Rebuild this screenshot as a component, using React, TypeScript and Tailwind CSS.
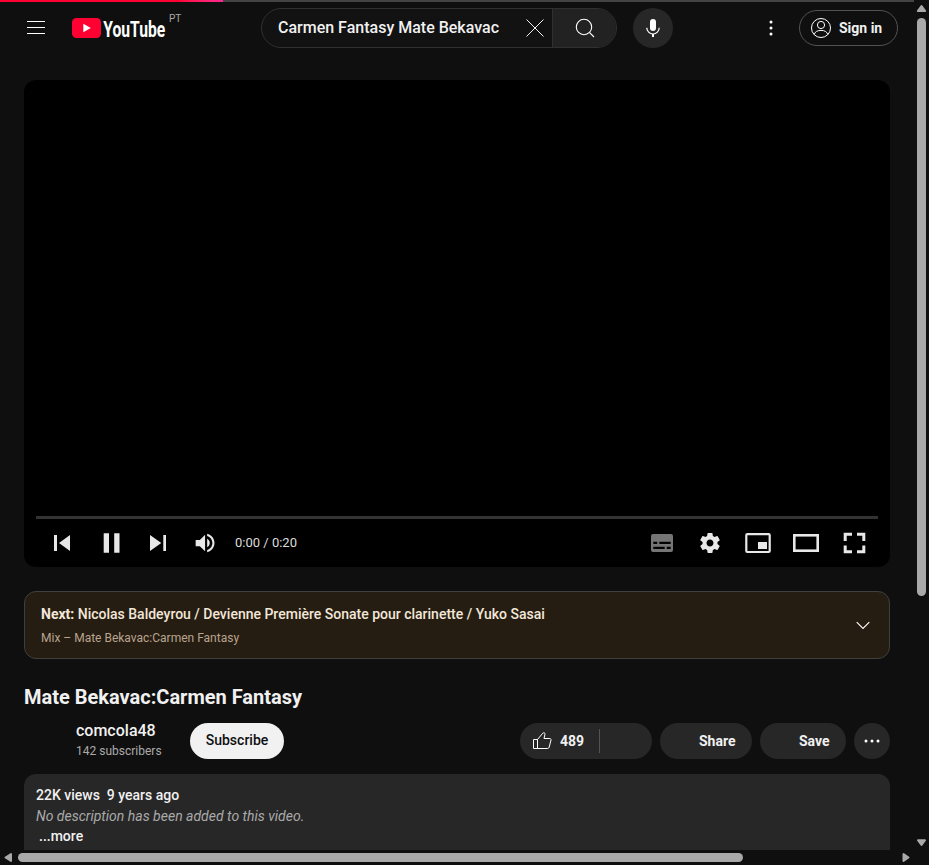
import type { ReactNode } from "react";

const Svg = ({ w, h = w, className = "", children }: { w: number; h?: number; className?: string; children: ReactNode }) => (
  <svg width={w} height={h} viewBox={`0 0 ${w} ${h}`} fill="none" className={`block shrink-0 ${className}`}>
    {children}
  </svg>
);

const GEAR =
  "m 23.94,18.78 c .03,-0.25 .05,-0.51 .05,-0.78 0,-0.27 -0.02,-0.52 -0.05,-0.78 l 1.68,-1.32 c .15,-0.12 .19,-0.33 .09,-0.51 l -1.6,-2.76 c -0.09,-0.17 -0.31,-0.24 -0.48,-0.17 l -1.99,.8 c -0.41,-0.32 -0.86,-0.58 -1.35,-0.78 l -0.30,-2.12 c -0.02,-0.19 -0.19,-0.33 -0.39,-0.33 l -3.2,0 c -0.2,0 -0.36,.14 -0.39,.33 l -0.30,2.12 c -0.48,.2 -0.93,.47 -1.35,.78 l -1.99,-0.8 c -0.18,-0.07 -0.39,0 -0.48,.17 l -1.6,2.76 c -0.10,.17 -0.05,.39 .09,.51 l 1.68,1.32 c -0.03,.25 -0.05,.52 -0.05,.78 0,.26 .02,.52 .05,.78 l -1.68,1.32 c -0.15,.12 -0.19,.33 -0.09,.51 l 1.6,2.76 c .09,.17 .31,.24 .48,.17 l 1.99,-0.8 c .41,.32 .86,.58 1.35,.78 l .30,2.12 c .02,.19 .19,.33 .39,.33 l 3.2,0 c .2,0 .36,-0.14 .39,-0.33 l .30,-2.12 c .48,-0.2 .93,-0.47 1.35,-0.78 l 1.99,.8 c .18,.07 .39,0 .48,-0.17 l 1.6,-2.76 c .09,-0.17 .05,-0.39 -0.09,-0.51 l -1.68,-1.32 z m -5.94,2.01 c -1.54,0 -2.8,-1.25 -2.8,-2.8 0,-1.54 1.25,-2.8 2.8,-2.8 1.54,0 2.8,1.25 2.8,2.8 0,1.54 -1.25,2.8 -2.8,2.8 z";

function Header() {
  return (
    <header className="relative flex h-14 shrink-0 items-center pl-6">
      <div className="absolute inset-x-0 top-0 flex h-0.5 bg-[#444]">
        <div className="w-[223px] bg-gradient-to-r from-[#ff0033] from-80% to-[#ff2791]" />
      </div>
      <Svg w={24}>
        <path d="M3 5.5h18M3 11.5h18M3 17.5h18" stroke="#fff" />
      </Svg>
      <Svg w={112} h={40} className="ml-6">
        <rect y="10" width="29" height="20" rx="4.5" fill="#ff0033" />
        <path d="M11.3 15.8v8.4l7.5-4.2z" fill="#fff" />
        <text x="31.3" y="28.8" textLength="62" lengthAdjust="spacingAndGlyphs" fill="#fff" fontSize="22" fontWeight="700" fontFamily="Roboto, sans-serif">YouTube</text>
        <text x="97" y="14.2" fill="#aaa" fontSize="10" fontFamily="Roboto, sans-serif">PT</text>
      </Svg>
      <div className="ml-[77px] flex h-10 w-[356px] overflow-hidden rounded-full border border-[#303030] bg-[#121212]">
        <div className="flex flex-1 items-center pl-4 text-base font-medium leading-6 text-[#f1f1f1]">
          <span className="whitespace-nowrap">Carmen Fantasy Mate Bekavac</span>
        </div>
        <Svg w={34} h={38}>
          <path d="M8.5 10.5l17 17M25.5 10.5l-17 17" stroke="#f1f1f1" />
        </Svg>
        <div className="flex w-16 items-center justify-center border-l border-[#303030] bg-[#222]">
          <Svg w={24}>
            <circle cx="11" cy="11" r="7.7" stroke="#fff" strokeWidth="1.1" />
            <path d="M16.4 16.4l4.6 4.6" stroke="#fff" strokeWidth="1.1" />
          </Svg>
        </div>
      </div>
      <div className="ml-4 flex size-10 items-center justify-center rounded-full bg-[#272727]">
        <Svg w={24}>
          <rect x="9" y="3" width="6" height="12" rx="3" fill="#fff" />
          <path d="M5.8 11.8a6.2 6.2 0 0 0 12.4 0" stroke="#fff" strokeWidth="1.2" />
          <path d="M12 18v3" stroke="#fff" strokeWidth="2" />
        </Svg>
      </div>
      <Svg w={24} className="ml-[86px]">
        <circle cx="12" cy="6" r="1.5" fill="#fff" />
        <circle cx="12" cy="12" r="1.5" fill="#fff" />
        <circle cx="12" cy="18" r="1.5" fill="#fff" />
      </Svg>
      <div className="ml-4 flex h-9 w-[99px] items-center rounded-full border border-[#535353] pl-[9px] text-sm font-bold text-[#f1f1f1]">
        <Svg w={24}>
          <circle cx="12" cy="12" r="9.5" stroke="#fff" />
          <circle cx="12" cy="9" r="3.6" stroke="#fff" />
          <path d="M5.2 18.5c.8-2.7 3-4.1 6.8-4.1s6 1.4 6.8 4.1" stroke="#fff" />
        </Svg>
        <span className="ml-1.5 whitespace-nowrap">Sign in</span>
      </div>
    </header>
  );
}

function Player() {
  return (
    <section className="flex h-[487px] shrink-0 flex-col justify-end rounded-xl bg-black px-3">
      <div className="h-[3px] bg-[#333]" />
      <div className="flex h-12 items-center pl-0.5">
        <Svg w={48}>
          <path d="M16 16h3v16h-3zM21 24l11 8V16z" fill="#e8e8e8" />
        </Svg>
        <Svg w={48}>
          <path d="M17.7 14.3h5.3v19.4h-5.3zM28.2 14.3h5.3v19.4h-5.3z" fill="#e8e8e8" />
        </Svg>
        <Svg w={48}>
          <path d="M16 16v16l11.3-8zM29.3 16H32v16h-2.7z" fill="#e8e8e8" />
        </Svg>
        <Svg w={48}>
          <path
            transform="translate(5.3 5.2) scale(1.045)"
            d="M8,21 L12,21 L17,26 L17,10 L12,15 L8,15 L8,21 Z M19,14 L19,22 C20.48,21.32 21.5,19.77 21.5,18 C21.5,16.26 20.48,14.74 19,14 ZM19,11.29 C21.89,12.15 24,14.83 24,18 C24,21.17 21.89,23.85 19,24.71 L19,26.77 C23.01,25.86 26,22.28 26,18 C26,13.72 23.01,10.14 19,9.23 L19,11.29 Z"
            fill="#e8e8e8"
          />
        </Svg>
        <span className="ml-[5px] whitespace-nowrap text-[13px] text-[#ddd]">0:00 / 0:20</span>
        <div className="ml-auto flex">
          <Svg w={48}>
            <path
              fillRule="evenodd"
              d="M15 15h18q2 0 2 2v14q0 2-2 2H15q-2 0-2-2V17q0-2 2-2zM15.3 22.7h4v2.3h-4zM21.3 22.7h11.4v2.3H21.3zM15.3 27.7h11.4V30H15.3zM28.7 27.7h4V30h-4z"
              fill="#757575"
            />
          </Svg>
          <Svg w={48}>
            <path transform="translate(1.5 1.5) scale(1.25)" fillRule="evenodd" d={GEAR} fill="#e8e8e8" />
          </Svg>
          <Svg w={48}>
            <rect x="12.3" y="15.2" width="23.4" height="17.8" rx="1" stroke="#e8e8e8" strokeWidth="2.2" />
            <rect x="24" y="23" width="9" height="7" fill="#e8e8e8" />
          </Svg>
          <Svg w={48}>
            <rect x="12.3" y="16.3" width="23.4" height="15.4" stroke="#e8e8e8" strokeWidth="2.6" />
          </Svg>
          <Svg w={48}>
            <path d="M15.2 22v-6.8H22M27 15.2h6.8V22M33.8 26.5v6.3H27M22 32.8h-6.8v-6.3" stroke="#e8e8e8" strokeWidth="3" />
          </Svg>
        </div>
      </div>
    </section>
  );
}

function NextCard() {
  return (
    <section className="mt-6 flex h-[68px] shrink-0 items-center rounded-xl border border-[#3f3f3f] bg-[#261d12] pl-4 pr-[14px]">
      <div className="flex-1 whitespace-nowrap">
        <p className="text-sm font-medium leading-5 text-[#f3e7d9]">
          <b className="font-bold">Next:</b> Nicolas Baldeyrou / Devienne Première Sonate pour clarinette / Yuko Sasai
        </p>
        <p className="mt-[5px] text-xs leading-[18px] text-[#b9a490]">Mix – Mate Bekavac:Carmen Fantasy</p>
      </div>
      <Svg w={24}>
        <path d="M5.7 9.2l6.3 6.3 6.3-6.3" stroke="#fff" strokeWidth="1.1" />
      </Svg>
    </section>
  );
}

function Actions() {
  return (
    <div className="ml-auto flex gap-2 text-sm font-bold leading-9 text-[#f1f1f1]">
      <div className="flex h-9 w-[132px] items-center rounded-full bg-[#272727] pl-2.5">
        <Svg w={24}>
          <path d="M3.5 10.5h4v9h-4zM7.5 10.5l5.3-6.3c.8-.9 2.4-.4 2.2.9L14 9.5h5.8c.9 0 1.4.7 1.2 1.5l-1.8 7.1c-.2.9-.8 1.4-1.7 1.4h-10z" stroke="#fff" />
        </Svg>
        <span className="ml-1.5">489</span>
        <span className="ml-[15px] h-6 w-px bg-[#535353]" />
      </div>
      <div className="h-9 w-[92px] rounded-full bg-[#272727] pl-[39px]">Share</div>
      <div className="h-9 w-[86px] rounded-full bg-[#272727] pl-[39px]">Save</div>
      <div className="flex size-9 items-center justify-center rounded-full bg-[#272727]">
        <Svg w={24}>
          <circle cx="6" cy="12" r="1.5" fill="#fff" />
          <circle cx="12" cy="12" r="1.5" fill="#fff" />
          <circle cx="18" cy="12" r="1.5" fill="#fff" />
        </Svg>
      </div>
    </div>
  );
}

export default function App() {
  return (
    <div className="grid h-[865px] w-[929px] grid-cols-[914px_15px] grid-rows-[850px_15px] overflow-hidden bg-[#0f0f0f] font-[Roboto,sans-serif] text-[#f1f1f1]">
      <div className="flex flex-col overflow-hidden">
        <Header />
        <main className="flex flex-1 flex-col pl-6 pr-6 pt-6">
          <Player />
          <NextCard />
          <h1 className="mt-6 whitespace-nowrap text-xl font-bold leading-7">Mate Bekavac:Carmen Fantasy</h1>
          <div className="mt-3 flex h-9 shrink-0">
            <div className="ml-[52px] w-[114px] whitespace-nowrap">
              <p className="-mt-[3px] text-base font-medium leading-[22px]">comcola48</p>
              <p className="text-xs leading-[18px] text-[#aaa]">142 subscribers</p>
            </div>
            <div className="flex h-9 w-[94px] justify-center rounded-full bg-[#f1f1f1] text-sm font-medium leading-[34px] text-[#0f0f0f]">Subscribe</div>
            <Actions />
          </div>
          <section className="mt-[15px] h-[76px] whitespace-nowrap rounded-t-xl bg-[#272727] px-3 pt-[11px] text-sm leading-5">
            <p className="font-medium">
              <span>22K views</span>
              <span className="ml-[7px]">9 years ago</span>
            </p>
            <p className="pt-px italic text-[#aaa]">No description has been added to this video.</p>
            <p className="pl-[3px] font-medium">...more</p>
          </section>
        </main>
      </div>
      <div className="flex flex-col items-center">
        <Svg w={15} h={18}>
          <path d="M7.5 6l3.7 5h-7.4z" fill="#a9a9a9" stroke="#a9a9a9" strokeWidth="2" strokeLinejoin="round" />
        </Svg>
        <div className="h-[578px] w-[9px] rounded-full bg-[#a9a9a9]" />
        <Svg w={15} className="mt-auto">
          <path d="M7.5 10l3.5-4.8h-7z" fill="#a9a9a9" stroke="#a9a9a9" strokeWidth="2" strokeLinejoin="round" />
        </Svg>
      </div>
      <div className="flex items-center">
        <Svg w={18} h={15}>
          <path d="M5.5 7.5l5.5-3.5v7z" fill="#a9a9a9" stroke="#a9a9a9" strokeWidth="2" strokeLinejoin="round" />
        </Svg>
        <div className="h-[9px] w-[725px] rounded-full bg-[#a9a9a9]" />
        <Svg w={15} className="ml-auto">
          <path d="M9.5 7.5l-5-3.5v7z" fill="#a9a9a9" stroke="#a9a9a9" strokeWidth="2" strokeLinejoin="round" />
        </Svg>
      </div>
    </div>
  );
}
